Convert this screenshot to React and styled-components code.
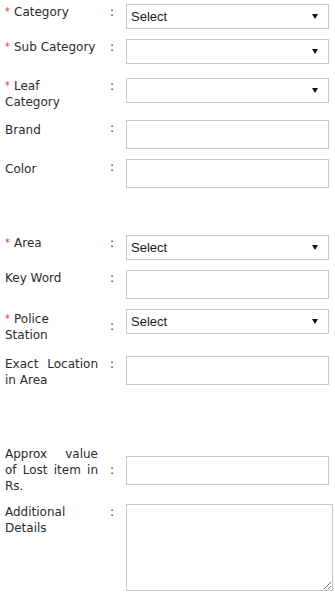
import React from "react";
import styled, { createGlobalStyle } from "styled-components";

const GlobalStyle = createGlobalStyle`
  html, body {
    margin: 0;
    padding: 0;
    background: #fff;
  }
`;

const Form = styled.form`
  padding: 4px 0 0 5px;
  font-family: "DejaVu Sans", Verdana, sans-serif;
  font-size: 12px;
  color: #2b2b2b;
`;

const Row = styled.div`
  display: flex;
  align-items: ${(p) => (p.$center ? "center" : "flex-start")};
  margin-top: ${(p) => p.$top || 0}px;
`;

const Label = styled.label`
  width: 93px;
  line-height: 16px;
  text-align: justify;
  flex-shrink: 0;
  padding-top: ${(p) => p.$pad || 0}px;
`;

const Req = styled.span`
  color: #d0404a;
  font-size: 10px;
  margin-right: 4px;
  vertical-align: 1px;
`;

const Colon = styled.span`
  width: 28px;
  text-align: center;
  line-height: 16px;
  flex-shrink: 0;
  align-self: ${(p) => (p.$middle ? "center" : "auto")};
`;

const SelectBox = styled.div`
  position: relative;
  width: 203px;
  height: 25px;
  box-sizing: border-box;
  border: 1px solid #c9c9c9;
  background: #fff;
  font-family: "Liberation Sans", Arial, sans-serif;
  font-size: 13px;
  color: #1a1a1a;
  display: flex;
  align-items: center;
  padding-left: 4px;
`;

const Arrow = styled.span`
  position: absolute;
  right: 10px;
  top: 9px;
  width: 0;
  height: 0;
  border-left: 3px solid transparent;
  border-right: 3px solid transparent;
  border-top: 5px solid #111;
`;

const TextInput = styled.input`
  width: 203px;
  height: 29px;
  box-sizing: border-box;
  border: 1px solid #c9c9c9;
  margin: 0;
  padding: 0 4px;
  font-family: "Liberation Sans", Arial, sans-serif;
  font-size: 13px;
  outline: none;
`;

const TextArea = styled.textarea`
  width: 207px;
  height: 87px;
  box-sizing: border-box;
  border: 1px solid #c9c9c9;
  margin: 0;
  padding: 4px;
  font-family: "Liberation Sans", Arial, sans-serif;
  font-size: 13px;
  outline: none;
`;

const Select = ({ value }) => (
  <SelectBox>
    {value}
    <Arrow />
  </SelectBox>
);

export default function App() {
  return (
    <>
      <GlobalStyle />
      <Form>
        <Row>
          <Label><Req>*</Req>Category</Label>
          <Colon>:</Colon>
          <Select value="Select" />
        </Row>
        <Row $top={10}>
          <Label><Req>*</Req>Sub Category</Label>
          <Colon>:</Colon>
          <Select />
        </Row>
        <Row $top={14}>
          <Label><Req>*</Req>Leaf<br />Category</Label>
          <Colon>:</Colon>
          <Select />
        </Row>
        <Row $top={10}>
          <Label $pad={2}>Brand</Label>
          <Colon>:</Colon>
          <TextInput />
        </Row>
        <Row $top={10}>
          <Label $pad={2}>Color</Label>
          <Colon>:</Colon>
          <TextInput />
        </Row>

        <Row $top={47}>
          <Label><Req>*</Req>Area</Label>
          <Colon>:</Colon>
          <Select value="Select" />
        </Row>
        <Row $top={10}>
          <Label>Key Word</Label>
          <Colon>:</Colon>
          <TextInput />
        </Row>
        <Row $top={10}>
          <Label $pad={2}><Req>*</Req>Police<br />Station</Label>
          <Colon $middle>:</Colon>
          <Select value="Select" />
        </Row>
        <Row $top={13}>
          <Label>Exact Location in Area</Label>
          <Colon>:</Colon>
          <TextInput />
        </Row>

        <Row $top={58} $center>
          <Label>Approx value of Lost item in Rs.</Label>
          <Colon>:</Colon>
          <TextInput />
        </Row>
        <Row $top={10}>
          <Label>Additional Details</Label>
          <Colon>:</Colon>
          <TextArea />
        </Row>
      </Form>
    </>
  );
}
